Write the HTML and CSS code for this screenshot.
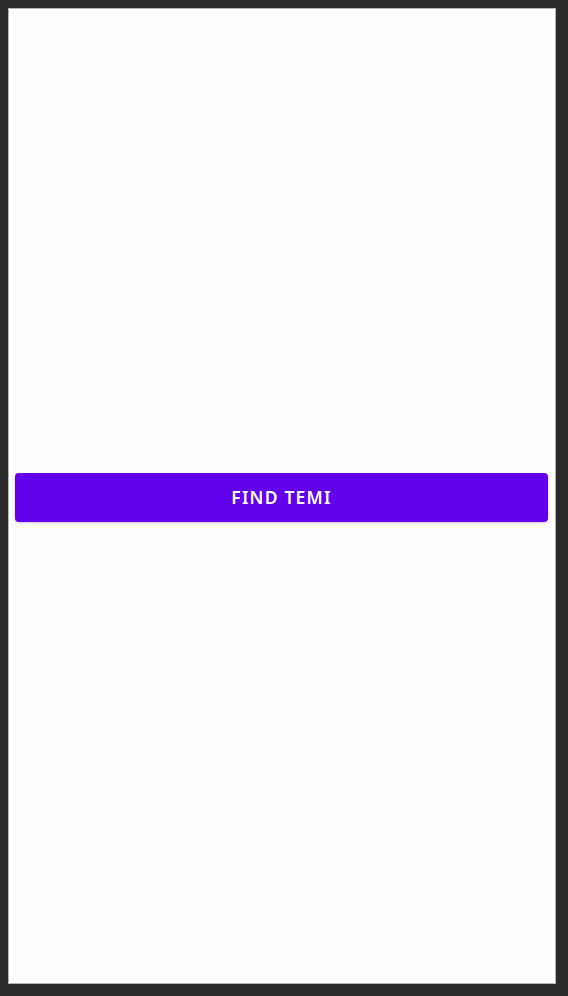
FILE: index.html
```html
<!DOCTYPE html>
<html>
<head>
<meta charset="utf-8">
<link rel="stylesheet" href="styles.css">
</head>
<body>
<div class="frame">
  <div class="screen">
    <button class="find-btn">FIND TEMI</button>
  </div>
</div>
</body>
</html>
```
FILE: styles.css
```css
html, body {
  margin: 0;
  padding: 0;
  background: #2a2a2a;
  height: 100%;
}
.frame {
  width: 568px;
  height: 996px;
  padding: 9px 13px 13px 9px;
  box-sizing: border-box;
}
.screen {
  height: 100%;
  background: #fefefe;
  box-shadow: 0 0 0 1px #b5b5b5;
  display: flex;
  flex-direction: column;
  justify-content: center;
  padding: 2px 7px 0 6px;
  box-sizing: border-box;
}
.find-btn {
  height: 49px;
  width: 100%;
  border: none;
  border-radius: 4px;
  background: #6200ee;
  color: #ffffff;
  font-family: "Noto Sans", Roboto, sans-serif;
  font-weight: 600;
  font-size: 17.5px;
  letter-spacing: 1.2px;
  box-shadow: 0 1px 3px rgba(0,0,0,0.2);
  padding: 0;
}
```
